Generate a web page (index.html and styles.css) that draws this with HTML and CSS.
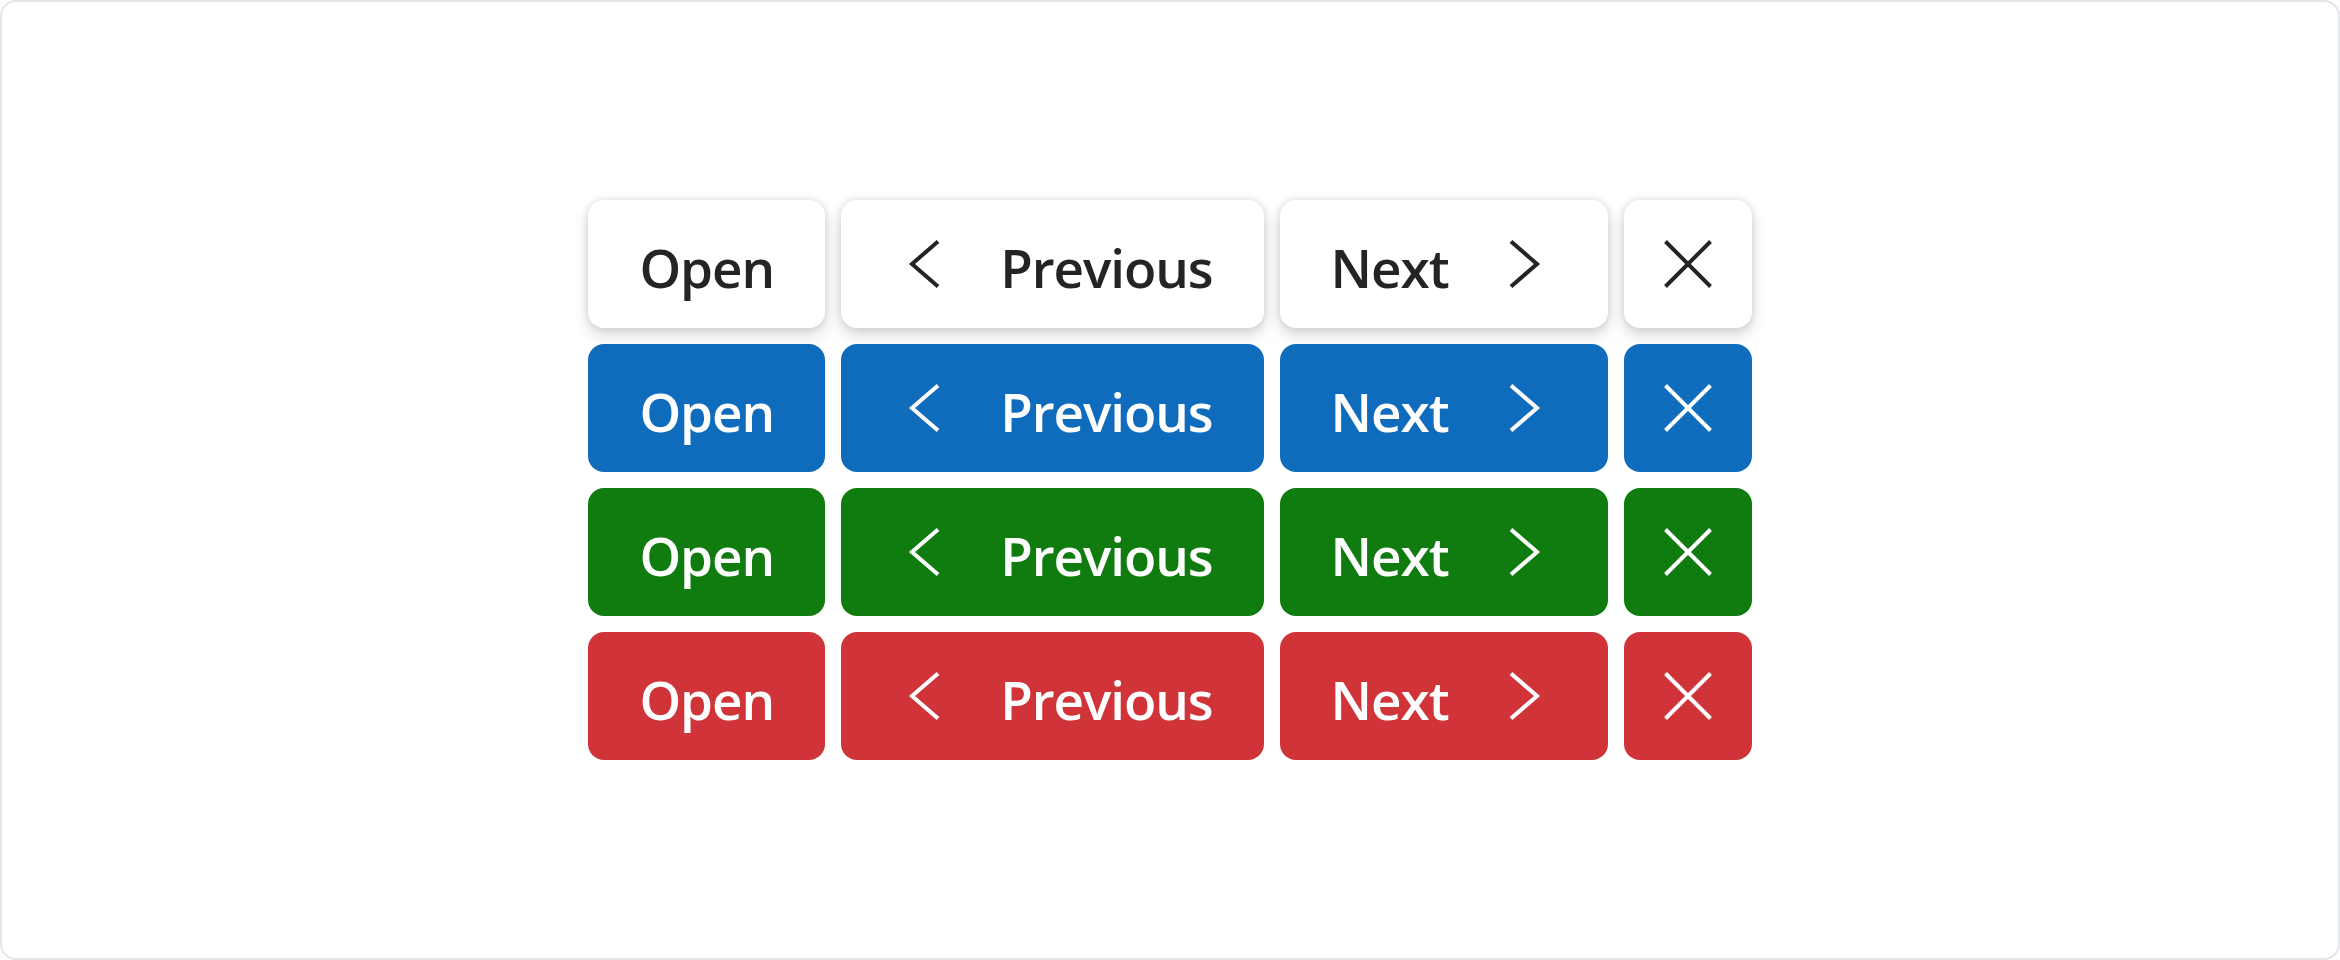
FILE: index.html
```html
<!DOCTYPE html>
<html lang="en">
<head>
<meta charset="utf-8">
<title>Buttons</title>
<link rel="stylesheet" href="styles.css">
</head>
<body>
<div class="frame">
  <div class="button-grid">
    <button class="btn btn-default">Open</button>
    <button class="btn btn-default"><svg class="chev" viewBox="0 0 66 48"><path d="M46 1.5 L20 24 L46 46.5"/></svg><span>Previous</span></button>
    <button class="btn btn-default"><span>Next</span><svg class="chev" viewBox="0 0 66 48"><path d="M20 1.5 L46 24 L20 46.5"/></svg></button>
    <button class="btn btn-default btn-icon"><svg class="cross" viewBox="0 0 48 48"><path d="M1.5 1.5 L46.5 46.5 M46.5 1.5 L1.5 46.5"/></svg></button>

    <button class="btn btn-blue">Open</button>
    <button class="btn btn-blue"><svg class="chev" viewBox="0 0 66 48"><path d="M46 1.5 L20 24 L46 46.5"/></svg><span>Previous</span></button>
    <button class="btn btn-blue"><span>Next</span><svg class="chev" viewBox="0 0 66 48"><path d="M20 1.5 L46 24 L20 46.5"/></svg></button>
    <button class="btn btn-blue btn-icon"><svg class="cross" viewBox="0 0 48 48"><path d="M1.5 1.5 L46.5 46.5 M46.5 1.5 L1.5 46.5"/></svg></button>

    <button class="btn btn-green">Open</button>
    <button class="btn btn-green"><svg class="chev" viewBox="0 0 66 48"><path d="M46 1.5 L20 24 L46 46.5"/></svg><span>Previous</span></button>
    <button class="btn btn-green"><span>Next</span><svg class="chev" viewBox="0 0 66 48"><path d="M20 1.5 L46 24 L20 46.5"/></svg></button>
    <button class="btn btn-green btn-icon"><svg class="cross" viewBox="0 0 48 48"><path d="M1.5 1.5 L46.5 46.5 M46.5 1.5 L1.5 46.5"/></svg></button>

    <button class="btn btn-red">Open</button>
    <button class="btn btn-red"><svg class="chev" viewBox="0 0 66 48"><path d="M46 1.5 L20 24 L46 46.5"/></svg><span>Previous</span></button>
    <button class="btn btn-red"><span>Next</span><svg class="chev" viewBox="0 0 66 48"><path d="M20 1.5 L46 24 L20 46.5"/></svg></button>
    <button class="btn btn-red btn-icon"><svg class="cross" viewBox="0 0 48 48"><path d="M1.5 1.5 L46.5 46.5 M46.5 1.5 L1.5 46.5"/></svg></button>
  </div>
</div>
</body>
</html>
```
FILE: styles.css
```css
html, body {
  margin: 0;
  padding: 0;
  background: #ffffff;
}

.frame {
  box-sizing: border-box;
  width: 2340px;
  height: 960px;
  border: 2px solid #e2e5e9;
  border-radius: 16px;
  background: #ffffff;
  display: flex;
  align-items: center;
  justify-content: center;
}

.button-grid {
  display: grid;
  grid-template-columns: auto auto auto auto;
  gap: 16px;
}

.btn {
  box-sizing: border-box;
  height: 128px;
  margin: 0;
  padding: 6px 51px 0;
  border: none;
  border-radius: 16px;
  display: inline-flex;
  align-items: center;
  justify-content: center;
  gap: 42px;
  font-family: "Open Sans", "Noto Sans", sans-serif;
  font-weight: 600;
  font-size: 53px;
  letter-spacing: -0.02em;
  line-height: 1;
  color: #ffffff;
  cursor: pointer;
}

.btn svg {
  fill: none;
  stroke: currentColor;
  stroke-width: 4;
  stroke-linecap: butt;
  stroke-linejoin: miter;
  flex: none;
  margin-top: -6px;
}

.chev {
  width: 66px;
  height: 48px;
}

.cross {
  width: 48px;
  height: 48px;
}

.btn-icon {
  width: 128px;
  padding: 0;
}

.btn-icon svg {
  margin-top: 0;
}

.btn-default {
  background: #ffffff;
  color: #242424;
  box-shadow: 0 0 8px rgba(0, 0, 0, 0.12), 0 8px 16px rgba(0, 0, 0, 0.14);
}

.btn-blue {
  background: #0f6cbd;
}

.btn-green {
  background: #107c10;
}

.btn-red {
  background: #d13438;
}
```
